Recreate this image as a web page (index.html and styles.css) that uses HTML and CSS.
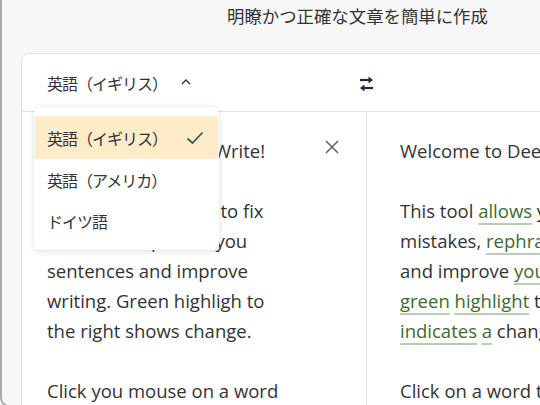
FILE: index.html
```html
<!DOCTYPE html>
<html lang="ja">
<head>
<meta charset="utf-8">
<link rel="stylesheet" href="styles.css">
</head>
<body>
<div class="frame">
  <h1 class="title">明瞭かつ正確な文章を簡単に作成</h1>
  <div class="card">
    <div class="header">
      <div class="src">
        <span class="lang">英語（イギリス）</span>
        <svg class="chev" width="10" height="7" viewBox="0 0 10 7"><path d="M1 6 L5 2 L9 6" fill="none" stroke="#333" stroke-width="1.3"/></svg>
      </div>
      <svg class="swap" width="15" height="18" viewBox="0 0 15 18"><path d="M1 5 H11" stroke="#1d2b3a" stroke-width="2.2"/><path d="M9.5 1.5 L14 5 L9.5 8.5 Z" fill="#1d2b3a"/><path d="M14 13 H4" stroke="#1d2b3a" stroke-width="2.2"/><path d="M5.5 9.5 L1 13 L5.5 16.5 Z" fill="#1d2b3a"/></svg>
      <div class="tgt"></div>
    </div>
    <div class="body">
      <div class="col left">
        <svg class="close" width="14" height="14" viewBox="0 0 14 14"><path d="M1 1 L13 13 M13 1 L1 13" stroke="#666" stroke-width="1.6"/></svg>
        <p class="nowrap">Welcome to DeepL Write!</p>
        <p class="nowrap">This tool allows you to fix<br>mistakes, rephrase you<br>sentences and improve<br>writing. Green highligh to<br>the right shows change.</p>
        <p class="nowrap">Click you mouse on a word</p>
      </div>
      <div class="col right">
        <p class="nowrap">Welcome to DeepL Write!</p>
        <p class="nowrap">This tool <span class="chg">allows</span> you to fix<br>mistakes, <span class="chg">rephrase</span> your sentences<br>and improve <span class="chg">your</span> writing. The<br><span class="chg">green</span> <span class="chg">highlight</span> to the right<br><span class="chg">indicates</span> <span class="chg">a</span> change.</p>
        <p class="nowrap">Click on a word to see</p>
      </div>
    </div>
    <div class="menu">
      <div class="item selected"><span>英語（イギリス）</span><svg width="18" height="14" viewBox="0 0 18 14"><path d="M1.5 7.5 L6.5 12 L16.5 1.5" fill="none" stroke="#2d5e5c" stroke-width="1.7"/></svg></div>
      <div class="item"><span>英語（アメリカ）</span></div>
      <div class="item"><span>ドイツ語</span></div>
    </div>
  </div>
</div>
</body>
</html>
```

FILE: styles.css
```css
html, body {
  margin: 0;
  padding: 0;
}
body {
  width: 540px;
  height: 405px;
  overflow: hidden;
  background: #f7f7f7;
  font-family: "Open Sans", "Noto Sans CJK JP", sans-serif;
  color: #333;
}
.frame {
  box-sizing: border-box;
  height: 407px;
  border-left: 2px solid #a9a9a9;
  border-bottom: 2px solid #a9a9a9;
  border-bottom-left-radius: 9px;
  overflow: hidden;
  position: relative;
}
.title {
  margin: 0;
  padding: 4px 0 0 225px;
  height: 53px;
  box-sizing: border-box;
  font-family: "Noto Sans CJK JP", sans-serif;
  font-weight: 400;
  font-size: 17.4px;
  line-height: 24px;
  color: #333;
  white-space: nowrap;
}
.card {
  position: relative;
  margin-left: 19px;
  width: 560px;
  height: 400px;
  background: #fff;
  border: 1px solid #e2e2e2;
  border-radius: 8px;
  box-sizing: border-box;
}
.header {
  display: flex;
  align-items: center;
  height: 57px;
  border-bottom: 1px solid #e2e2e2;
}
.src {
  display: flex;
  align-items: center;
  width: 337px;
  padding-left: 25px;
  box-sizing: border-box;
}
.lang {
  font-family: "Noto Sans CJK JP", sans-serif;
  font-size: 16px;
  letter-spacing: -1px;
  color: #333;
}
.chev {
  margin-left: 14px;
  margin-top: -2px;
}
.swap {
  margin-top: 2px;
}
.body {
  display: grid;
  grid-template-columns: 345px 1fr;
  height: 300px;
}
.col {
  position: relative;
  padding-top: 24px;
  font-size: 18.5px;
  line-height: 30px;
}
.col p {
  margin: 0 0 30px 0;
}
.left {
  border-right: 1px solid #e2e2e2;
  padding-left: 25px;
}
.right {
  padding-left: 33px;
}
.nowrap {
  white-space: nowrap;
}
.close {
  position: absolute;
  top: 28px;
  right: 27px;
}
.chg {
  color: #3c6a34;
  text-decoration: underline;
  text-decoration-color: #b7cfb0;
  text-decoration-thickness: 2px;
  text-underline-offset: 5px;
}
.menu {
  position: absolute;
  left: 12px;
  top: 53px;
  width: 185px;
  padding: 9px 1px;
  box-sizing: border-box;
  background: #fff;
  border-radius: 6px;
  box-shadow: 0 1px 6px rgba(0, 0, 0, 0.14);
}
.item {
  display: flex;
  align-items: center;
  justify-content: space-between;
  height: 41px;
  padding: 0 14px 0 12px;
  font-family: "Noto Sans CJK JP", sans-serif;
  font-size: 16px;
  letter-spacing: -1px;
  color: #333;
}
.item.selected {
  background: #fdebc9;
  height: 43px;
}
```
